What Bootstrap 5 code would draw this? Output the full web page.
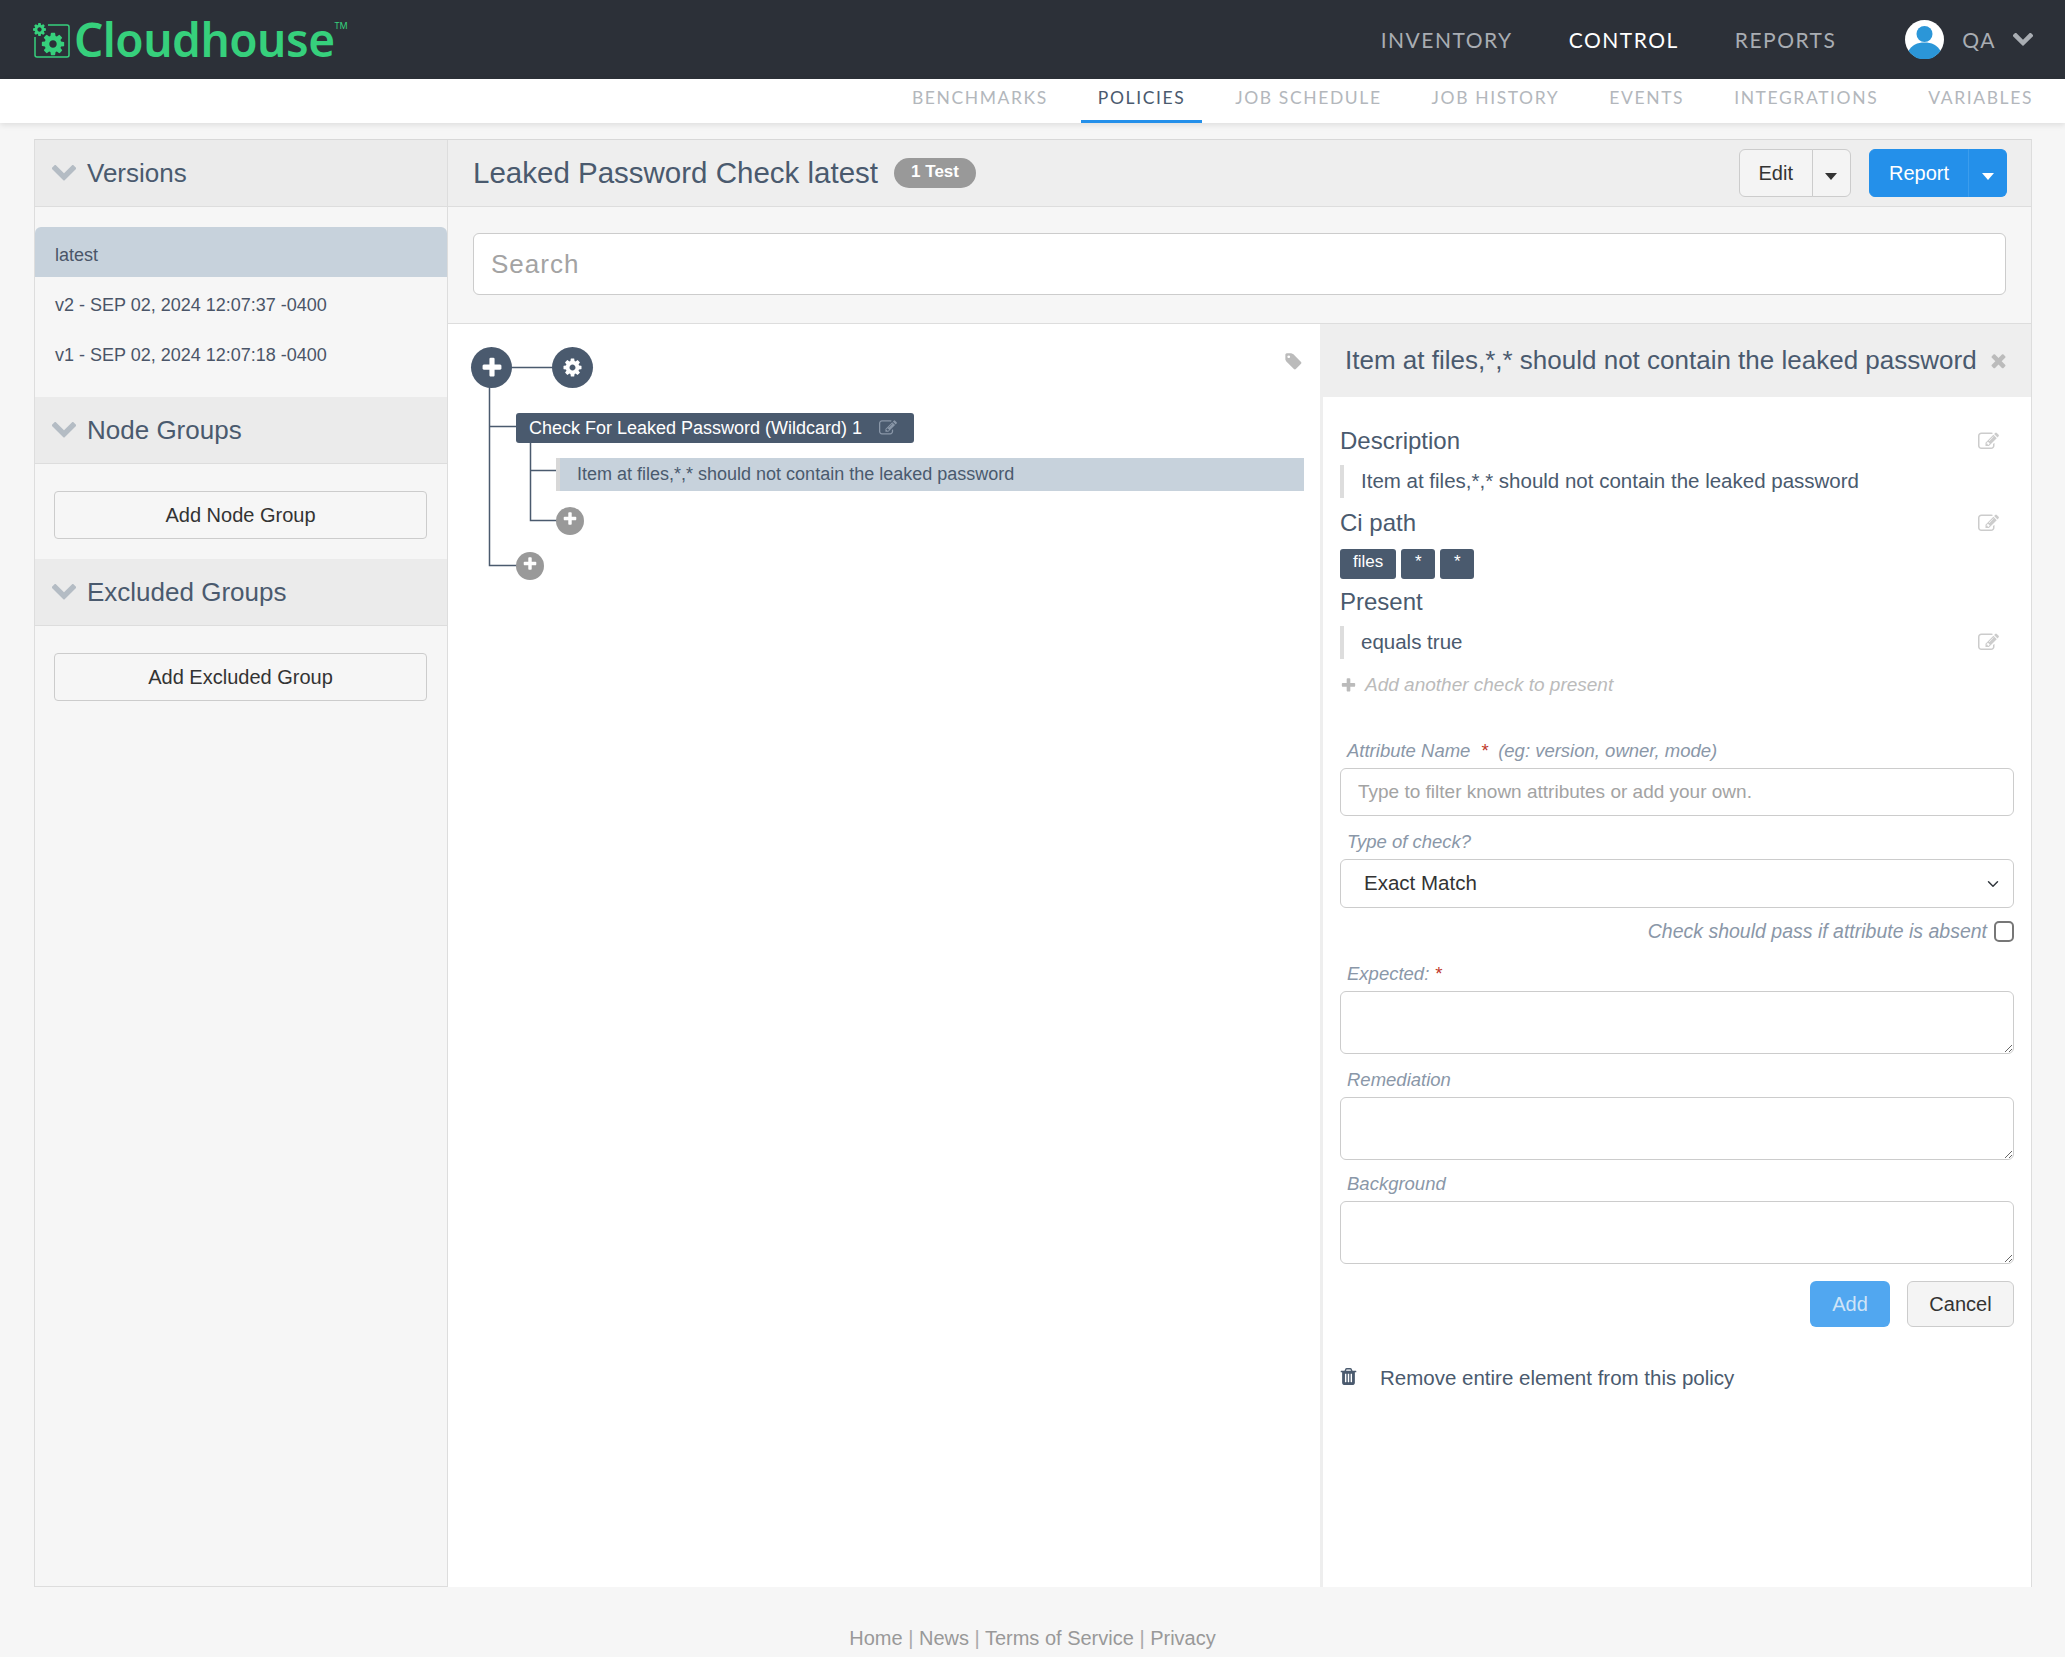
<!DOCTYPE html>
<html lang="en">
<head>
<meta charset="UTF-8">
<title>Cloudhouse - Policies</title>
<link href="https://cdn.jsdelivr.net/npm/bootstrap@5.3.3/dist/css/bootstrap.min.css" rel="stylesheet">
<style>
body { background: #f6f6f6; font-family: "Liberation Sans", Arial, sans-serif; font-size: 18px; color: #4a5568; height: 1657px; overflow: hidden; }
.topbar { background: #2c3038; height: 79px; padding: 0 32px; }
.brand-wrap { color: #36d07c; }
.brand-name { font-family: "Noto Sans", sans-serif; font-weight: 600; font-size: 46px; line-height: 79px; letter-spacing: -.5px; color: #36d07c; }
.brand-tm { font-family: "Noto Sans", sans-serif; font-size: 9px; align-self: flex-start; margin-top: 19px; color: #36d07c; }
.brand-icon { width: 38px; height: 36px; margin-right: 4px; }
.top-links { gap: 56px; margin-right: 69px; }
.top-links a, .user-name { font-family: Lato, sans-serif; font-size: 21px; letter-spacing: 1.5px; color: #a9adb3; text-decoration: none; }
.top-links a.on { color: #fff; }
.avatar { width: 39px; height: 39px; }
.user-name { margin-left: 18px; margin-right: 17px; }
.chev-top { width: 20px; height: 13px; color: #a9adb3; }
.subbar { background: #fff; height: 44px; box-shadow: 0 2px 6px rgba(0,0,0,.1); padding-right: 32px; gap: 50px; position: relative; }
.subbar a { font-family: Lato, sans-serif; font-size: 17.5px; letter-spacing: 1.6px; color: #b3b7bc; text-decoration: none; line-height: 38px; height: 44px; display: block; }
.subbar a.on { color: #4a5a6e; border-bottom: 3px solid #2490ea; margin: 0 -17px; padding: 0 17px; }
.shell { margin: 16px 33px 0 34px; height: 1448px; border: 1px solid #ddd; border-top-color: #d8d8d8; }
.side { width: 413px; flex: none; border-right: 1px solid #ddd; background: #f6f6f6; }
.side-head { height: 67px; background: #ebebeb; border-bottom: 1px solid #ddd; padding-left: 17px; font-size: 26px; color: #4a5a6e; gap: 11px; }
.side-head svg { width: 24px; height: 16px; color: #b4bcc4; }
.ver-list { padding: 20px 0; }
.ver-row { height: 50px; padding-left: 20px; display: flex; align-items: center; padding-bottom: 2px; color: #4a5568; background: transparent; border: 0; border-radius: 0; }
.ver-row.sel { background: #c7d2dc; }
.side-btn-wrap { padding: 27px 20px 20px 19px; }
.side-btn { height: 48px; background: #f6f6f6; border: 1px solid #ccc; font-size: 20px; color: #333; border-radius: 4px; }
.page-head { height: 67px; background: #eee; border-bottom: 1px solid #ddd; padding: 0 24px 0 25px; }
.page-title { font-size: 29.5px; color: #4a5a6e; margin: 0; font-weight: 400; }
.count-pill { background: #999; font-size: 17px; margin-left: 16px; border-radius: 15px; height: 30px; width: 82px; padding: 0; line-height: 28px; font-weight: 700; }
.tool-btn { height: 48px; font-size: 20px; padding: 0 19px; }
.tool-grey { background: #f4f4f4; border: 1px solid #ccc; color: #333; }
.tool-blue { background: #2490ea; border: 1px solid #2490ea; color: #fff; }
.tool-caret { padding: 0; width: 39px; }
.tool-blue.tool-caret { border-left-color: #3b9ded; }
.caret-tri { width: 0; height: 0; display: inline-block; border-left: 6px solid transparent; border-right: 6px solid transparent; border-top: 7px solid currentColor; }
.tool-gap { gap: 18px; }
.search-band { height: 117px; padding: 26px 25px 0 25px; border-bottom: 1px solid #ddd; }
.search-input { height: 62px; font-size: 26px; letter-spacing: 1px; padding-left: 17px; border-color: #ccc; }
.search-input::placeholder, .plain-input::placeholder { color: #a3a3a3; }
.split { height: 1263px; }
.tree-pane { width: 872px; flex: none; background: #fff; position: relative; }
.tree-lines { position: absolute; left: 0; top: 0; width: 872px; height: 300px; }
.tree-node { position: absolute; display: flex; align-items: center; color: #fff; }
.node-round { border-radius: 50%; justify-content: center; }
.node-big { width: 41px; height: 41px; background: #4a5a6e; top: 23px; }
.node-big svg { width: 24px; height: 24px; }
.node-plus { left: 23px; }
.node-gear { left: 104px; }
.node-gear svg { width: 21px; height: 21px; }
.node-add { width: 28px; height: 28px; background: #999; }
.node-add svg { width: 16px; height: 16px; margin-top: -5px; }
.node-add-inner { left: 108px; top: 183px; }
.node-add-outer { left: 68px; top: 228px; }
.node-group { left: 68px; top: 89px; width: 398px; height: 30px; background: #4a5a6e; border-radius: 3px; padding-left: 13px; }
.node-group svg { width: 18px; height: 18px; margin-left: 17px; color: #8a97a8; }
.node-item { left: 108px; top: 134px; width: 748px; height: 33px; background: #c7d2dc; border-left: 4px solid #d8d8d8; padding-left: 17px; color: #4a5a6e; }
.tag-icon { position: absolute; left: 836px; top: 28px; width: 19px; height: 19px; color: #bbb; }
.detail { flex-grow: 1; background: #fff; border-left: 3px solid #eee; }
.detail-head { height: 73px; background: #eee; padding: 0 22px 0 22px; }
.detail-title { font-size: 26px; color: #4a5a6e; margin: 0; font-weight: 400; }
.detail-head svg { width: 21px; height: 21px; color: #bbb; }
.detail-body { padding: 28px 17px 0 17px; }
.prop-head { height: 32px; font-size: 24px; color: #4a5a6e; line-height: 32px; padding-right: 15px; }
.edit-ico { width: 21px; height: 21px; color: #ccc; }
.prop-val { height: 33px; border-left: 4px solid #ddd; padding-left: 17px; padding-right: 15px; font-size: 20.5px; color: #4a5a6e; margin-top: 8px; margin-bottom: 9px; }
.path-chips { margin: 10px 0 7px; gap: 5px; }
.path-chips .badge { background: #4a5a6e; height: 30px; min-width: 34px; font-size: 17px; font-weight: 400; padding: 4px 13px 0; border-radius: 3px; }
.add-check { height: 30px; margin-top: 11px; margin-bottom: 38px; font-style: italic; color: #bbb; font-size: 19px; gap: 8px; }
.add-check svg { width: 17px; height: 17px; }
.fld-label { height: 26px; line-height: 26px; padding-left: 7px; font-style: italic; color: #8a97a8; font-size: 18.5px; margin-bottom: 4px; }
.req { color: #c0392b; }
.plain-input { height: 48px; font-size: 19px; padding-left: 17px; border-color: #ccc; }
.plain-select { height: 49px; font-size: 20.5px; padding-left: 23px; border-color: #ccc; color: #333; }
.plain-area { height: 63px; border-color: #ccc; }
.gap-t13 { margin-top: 13px; }
.gap-t11 { margin-top: 11px; }
.gap-t19 { margin-top: 19px; }
.absent-row { margin-top: 13px; height: 21px; font-style: italic; color: #8a97a8; font-size: 19.5px; gap: 7px; }
.absent-row .form-check-input { width: 20px; height: 21px; margin: 0; border: 2px solid #777; border-radius: 5px; }
.action-row { margin-top: 17px; gap: 17px; }
.act-btn { height: 46px; font-size: 20px; padding: 0; }
.act-add { width: 80px; background: #51a7f0; border: 0; color: #cfe4f7; }
.act-cancel { width: 107px; background: #f4f4f4; border: 1px solid #ccc; color: #333; }
.remove-row { margin-top: 36px; height: 30px; color: #4a5a6e; font-size: 20.5px; gap: 23px; }
.remove-row svg { width: 17px; height: 19px; margin-top: -4px; }
.foot-links { margin-top: 36px; text-align: center; font-size: 20px; color: #aaa; padding-right: 0; }
.foot-links a { color: #999; text-decoration: none; }
</style>
</head>
<body>
<svg class="d-none">
  <symbol id="i-gear" viewBox="0 0 1792 1792"><path fill="currentColor" d="M1152 896q0-106-75-181t-181-75-181 75-75 181 75 181 181 75 181-75 75-181zm512-109v222q0 12-8 23t-20 13l-185 28q-19 54-39 91 35 50 107 138 10 12 10 25t-9 23q-27 37-99 108t-94 71q-12 0-26-9l-138-108q-44 23-91 38-16 136-29 186-7 28-36 28h-222q-14 0-24.5-8.5t-11.5-21.5l-28-184q-49-16-90-37l-141 107q-10 9-25 9-14 0-25-11-126-114-165-168-7-10-7-23 0-12 8-23 15-21 51-66.5t54-70.5q-27-50-41-99l-183-27q-13-2-21-12.5t-8-23.5v-222q0-12 8-23t19-13l186-28q14-46 39-92-40-57-107-138-10-12-10-24 0-10 9-23 26-36 98.5-107.5t94.5-71.5q13 0 26 10l138 107q44-23 91-38 16-136 29-186 7-28 36-28h222q14 0 24.5 8.5t11.5 21.5l28 184q49 16 90 37l142-107q9-9 24-9 13 0 25 10 129 119 165 170 7 8 7 22 0 12-8 23-15 21-51 66.5t-54 70.5q26 50 41 98l183 28q13 2 21 12.5t8 23.5z"/></symbol>
  <symbol id="i-edit" viewBox="0 0 1792 1792"><path fill="currentColor" d="M888 1184l116-116-152-152-116 116v56h96v96h56zm440-720q-16-16-33 1l-350 350q-17 17-1 33t33-1l350-350q17-17 1-33zm80 594v190q0 119-84.5 203.5t-203.5 84.5h-832q-119 0-203.5-84.5t-84.5-203.5v-832q0-119 84.5-203.5t203.5-84.5h832q63 0 117 25 15 7 18 23 3 17-9 29l-49 49q-14 14-32 8-23-6-45-6h-832q-66 0-113 47t-47 113v832q0 66 47 113t113 47h832q66 0 113-47t47-113v-126q0-13 9-22l64-64q15-15 35-7t20 29zm-96-738l288 288-672 672h-288v-288zm444 132l-92 92-288-288 92-92q28-28 68-28t68 28l152 152q28 28 28 68t-28 68z"/></symbol>
  <symbol id="i-trash" viewBox="128 128 1536 1536"><path fill="currentColor" d="M704 1376v-704q0-14-9-23t-23-9h-64q-14 0-23 9t-9 23v704q0 14 9 23t23 9h64q14 0 23-9t9-23zm256 0v-704q0-14-9-23t-23-9h-64q-14 0-23 9t-9 23v704q0 14 9 23t23 9h64q14 0 23-9t9-23zm256 0v-704q0-14-9-23t-23-9h-64q-14 0-23 9t-9 23v704q0 14 9 23t23 9h64q14 0 23-9t9-23zm-544-992h448l-48-117q-7-9-17-11h-317q-10 2-17 11zm928 32v64q0 14-9 23t-23 9h-96v948q0 83-47 143.5t-113 60.5h-832q-66 0-113-58.5t-47-141.5v-952h-96q-14 0-23-9t-9-23v-64q0-14 9-23t23-9h309l70-167q15-37 54-63t79-26h320q40 0 79 26t54 63l70 167h309q14 0 23 9t9 23z"/></symbol>
  <symbol id="i-tag" viewBox="0 0 1792 1792"><path fill="currentColor" d="M576 448q0-53-37.5-90.5t-90.5-37.5-90.5 37.5-37.5 90.5 37.5 90.5 90.5 37.5 90.5-37.5 37.5-90.5zm1067 576q0 53-37 90l-491 492q-39 37-91 37-53 0-90-37l-715-716q-38-37-64.5-101t-26.5-117v-416q0-52 38-90t90-38h416q53 0 117 26.5t102 64.5l715 714q37 39 37 91z"/></symbol>
  <symbol id="i-chev" viewBox="109 568 1574 1000"><path fill="currentColor" d="M1683 808l-742 741q-19 19-45 19t-45-19l-742-741q-19-19-19-45.5t19-45.5l166-165q19-19 45-19t45 19l531 531 531-531q19-19 45-19t45 19l166 165q19 19 19 45.5t-19 45.5z"/></symbol>
  <symbol id="i-times" viewBox="0 0 1792 1792"><path fill="currentColor" d="M1490 1322q0 40-28 68l-136 136q-28 28-68 28t-68-28l-294-294-294 294q-28 28-68 28t-68-28l-136-136q-28-28-28-68t28-68l294-294-294-294q-28-28-28-68t28-68l136-136q28-28 68-28t68 28l294 294 294-294q28-28 68-28t68 28l136 136q28 28 28 68t-28 68l-294 294 294 294q28 28 28 68z"/></symbol>
  <symbol id="i-plus" viewBox="0 0 1792 1792"><path fill="currentColor" d="M1600 736v192q0 40-28 68t-68 28h-416v416q0 40-28 68t-68 28h-192q-40 0-68-28t-28-68v-416h-416q-40 0-68-28t-28-68v-192q0-40 28-68t68-28h416v-416q0-40 28-68t68-28h192q40 0 68 28t28 68v416h416q40 0 68 28t28 68z"/></symbol>
</svg>

<nav class="navbar topbar d-flex flex-nowrap justify-content-between">
  <div class="brand-wrap d-flex align-items-center">
    <svg class="brand-icon" viewBox="0 0 38 36">
      <rect x="3" y="3" width="34" height="32" rx="2" fill="none" stroke="currentColor" stroke-width="1.5"/>
      <rect x="0" y="0" width="16" height="15" fill="#2c3038"/>
      <use href="#i-gear" x="0" y="0" width="15" height="15"/>
      <use href="#i-gear" x="8" y="9" width="26" height="26"/>
    </svg>
    <span class="brand-name">Cloudhouse</span><span class="brand-tm">TM</span>
  </div>
  <div class="d-flex align-items-center">
    <div class="top-links d-flex">
      <a href="#">INVENTORY</a>
      <a href="#" class="on">CONTROL</a>
      <a href="#">REPORTS</a>
    </div>
    <svg class="avatar" viewBox="0 0 39 39">
      <circle cx="19.5" cy="19.5" r="19.5" fill="#fff"/>
      <circle cx="19.5" cy="14" r="8" fill="#2b96d8"/>
      <path d="M3.5 31c3-6 9-8.500 16-8.500s13 2.500 16 8.500a19.500 19.500 0 0 1-32 0z" fill="#2b96d8"/>
    </svg>
    <span class="user-name">QA</span>
    <svg class="chev-top"><use href="#i-chev"/></svg>
  </div>
</nav>

<div class="subbar d-flex justify-content-end">
  <a href="#">BENCHMARKS</a>
  <a href="#" class="on">POLICIES</a>
  <a href="#">JOB SCHEDULE</a>
  <a href="#">JOB HISTORY</a>
  <a href="#">EVENTS</a>
  <a href="#">INTEGRATIONS</a>
  <a href="#">VARIABLES</a>
</div>

<div class="shell d-flex">
  <aside class="side">
    <div class="side-head d-flex align-items-center"><svg><use href="#i-chev"/></svg>Versions</div>
    <div class="ver-list list-group">
      <a href="#" class="ver-row sel list-group-item">latest</a>
      <a href="#" class="ver-row list-group-item">v2 - SEP 02, 2024 12:07:37 -0400</a>
      <a href="#" class="ver-row list-group-item">v1 - SEP 02, 2024 12:07:18 -0400</a>
    </div>
    <div class="side-head d-flex align-items-center"><svg><use href="#i-chev"/></svg>Node Groups</div>
    <div class="side-btn-wrap"><button class="btn side-btn w-100">Add Node Group</button></div>
    <div class="side-head d-flex align-items-center"><svg><use href="#i-chev"/></svg>Excluded Groups</div>
    <div class="side-btn-wrap"><button class="btn side-btn w-100">Add Excluded Group</button></div>
  </aside>

  <main class="flex-grow-1">
    <div class="page-head d-flex align-items-center justify-content-between">
      <div class="d-flex align-items-center">
        <h1 class="page-title">Leaked Password Check latest</h1>
        <span class="badge count-pill">1 Test</span>
      </div>
      <div class="d-flex tool-gap">
        <div class="btn-group">
          <button class="btn tool-btn tool-grey">Edit</button>
          <button class="btn tool-btn tool-grey tool-caret"><span class="caret-tri"></span></button>
        </div>
        <div class="btn-group">
          <button class="btn tool-btn tool-blue">Report</button>
          <button class="btn tool-btn tool-blue tool-caret"><span class="caret-tri"></span></button>
        </div>
      </div>
    </div>
    <div class="search-band">
      <input class="form-control search-input" placeholder="Search">
    </div>
    <div class="split d-flex">
      <section class="tree-pane">
        <svg class="tree-lines" fill="none" stroke="#4a5a6e" stroke-width="1.5">
          <path d="M60 43.500H110M41.500 60V241.500H70M41.500 102.500H70M82.500 115V196.500H110M82.500 146.500H110"/>
        </svg>
        <div class="tree-node node-round node-big node-plus"><svg><use href="#i-plus"/></svg></div>
        <div class="tree-node node-round node-big node-gear"><svg><use href="#i-gear"/></svg></div>
        <svg class="tag-icon"><use href="#i-tag"/></svg>
        <div class="tree-node node-group">Check For Leaked Password (Wildcard) 1 <svg><use href="#i-edit"/></svg></div>
        <div class="tree-node node-item">Item at files,*,* should not contain the leaked password</div>
        <div class="tree-node node-round node-add node-add-inner"><svg><use href="#i-plus"/></svg></div>
        <div class="tree-node node-round node-add node-add-outer"><svg><use href="#i-plus"/></svg></div>
      </section>

      <section class="detail">
        <div class="detail-head d-flex align-items-center justify-content-between">
          <h2 class="detail-title">Item at files,*,* should not contain the leaked password</h2>
          <svg><use href="#i-times"/></svg>
        </div>
        <div class="detail-body">
          <div class="prop-head d-flex justify-content-between align-items-center">Description <svg class="edit-ico"><use href="#i-edit"/></svg></div>
          <div class="prop-val d-flex align-items-center">Item at files,*,* should not contain the leaked password</div>
          <div class="prop-head d-flex justify-content-between align-items-center">Ci path <svg class="edit-ico"><use href="#i-edit"/></svg></div>
          <div class="path-chips d-flex">
            <span class="badge">files</span><span class="badge">*</span><span class="badge">*</span>
          </div>
          <div class="prop-head">Present</div>
          <div class="prop-val d-flex align-items-center justify-content-between">equals true <svg class="edit-ico"><use href="#i-edit"/></svg></div>
          <div class="add-check d-flex align-items-center"><svg><use href="#i-plus"/></svg>Add another check to present</div>

          <form>
            <div class="fld-label">Attribute Name &nbsp;<span class="req">*</span>&nbsp; (eg: version, owner, mode)</div>
            <input class="form-control plain-input" placeholder="Type to filter known attributes or add your own.">
            <div class="fld-label gap-t13">Type of check?</div>
            <select class="form-select plain-select"><option>Exact Match</option></select>
            <div class="absent-row d-flex justify-content-end align-items-center">
              <label for="absent">Check should pass if attribute is absent</label>
              <input class="form-check-input" type="checkbox" id="absent">
            </div>
            <div class="fld-label gap-t19">Expected: <span class="req">*</span></div>
            <textarea class="form-control plain-area"></textarea>
            <div class="fld-label gap-t13">Remediation</div>
            <textarea class="form-control plain-area"></textarea>
            <div class="fld-label gap-t11">Background</div>
            <textarea class="form-control plain-area"></textarea>
            <div class="action-row d-flex justify-content-end">
              <button type="button" class="btn act-btn act-add">Add</button>
              <button type="button" class="btn act-btn act-cancel">Cancel</button>
            </div>
          </form>
          <div class="remove-row d-flex align-items-center"><svg><use href="#i-trash"/></svg>Remove entire element from this policy</div>
        </div>
      </section>
    </div>
  </main>
</div>

<footer class="foot-links"><a href="#">Home</a> | <a href="#">News</a> | <a href="#">Terms of Service</a> | <a href="#">Privacy</a></footer>
<script src="https://cdn.jsdelivr.net/npm/bootstrap@5.3.3/dist/js/bootstrap.bundle.min.js"></script>
</body>
</html>
